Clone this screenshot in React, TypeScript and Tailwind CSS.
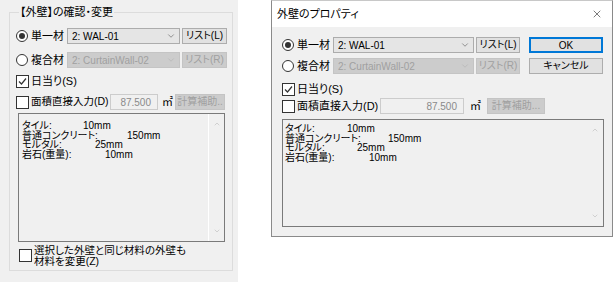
import { ChevronDown, ChevronUp, X } from "lucide-react";

const font = "font-['Liberation_Sans','Noto_Sans_CJK_JP',sans-serif] [font-feature-settings:'palt']";

export default function App() {
  return (
    <div className={`flex h-[282px] w-[615px] items-start whitespace-nowrap bg-white text-[11px] text-black ${font}`}>
      <LeftPanel />
      <PropertyDialog />
    </div>
  );
}

function LeftPanel() {
  return (
    <div className="h-[282px] w-[238px] shrink-0 bg-[#f0f0f0] pl-[9px] pt-[4px]">
      <fieldset className="h-[267px] w-[224px] border border-[#dcdcdc] pl-[6px]">
        <legend className="ml-[3px] h-[16px] px-[1px] leading-[16px]">【外壁】の確認・変更</legend>

        <div className="mt-[8px] flex h-[16px] items-center">
          <Choice checked label="単一材" w="w-[51px]" />
          <Combo value="2: WAL-01" className="w-[113px]" />
          <Button label="リスト(L)" className="ml-[2px] w-[45px]" />
        </div>
        <div className="mt-[8px] flex h-[16px] items-center">
          <Choice label="複合材" w="w-[51px]" />
          <Combo value="2: CurtainWall-02" disabled className="w-[113px]" />
          <Button label="リスト(R)" disabled className="ml-[2px] w-[45px]" />
        </div>

        <div className="mt-[5px] flex h-[16px] items-center">
          <Check checked />
          <span className="ml-[2px]">日当り(S)</span>
        </div>
        <div className="mt-[5px] flex h-[16px] items-center">
          <Check />
          <span className="ml-[2px] w-[79px] text-[10.5px]">面積直接入力(D)</span>
          <Field value="87.500" className="w-[48px]" />
          <span className="ml-[4px] w-[12px]">㎡</span>
          <Button label="計算補助.." disabled className="ml-[1px] w-[50px]" />
        </div>

        <Memo
          className="ml-[2px] mt-[3px] h-[129px] w-[207px]"
          pad="pl-[3px] pt-[7px]"
          widths={["w-[61px]", "w-[105px]", "w-[73px]", "w-[83px]"]}
          divider
        />

        <div className="ml-[3px] mt-[3px] flex items-center">
          <Check />
          <span className="ml-[2px] text-[10.5px] leading-[10.5px]">
            選択した外壁と同じ材料の外壁も
            <br />
            材料を変更(Z)
          </span>
        </div>
      </fieldset>
    </div>
  );
}

function PropertyDialog() {
  return (
    <div className="ml-[33px] flex h-[237px] w-[342px] flex-col border border-[#8a8a8a] border-t-[#c8c8c8] bg-[#f0f0f0]">
      <div className="flex h-[26px] items-center justify-between bg-white pl-[5px] pr-[9px]">
        <span className="text-[11px]">外壁のプロパティ</span>
        <X className="h-[12px] w-[12px] text-[#222]" strokeWidth={1.2} />
      </div>

      <div className="pl-[10px] pt-[10px]">
        <div className="flex h-[16px] items-center">
          <Choice checked label="単一材" w="w-[51px]" />
          <Combo value="2: WAL-01" className="w-[141px]" />
          <Button label="リスト(L)" className="ml-[2px] w-[44px]" />
          <button className="ml-[9px] flex h-[16px] w-[74px] items-center justify-center border-2 border-[#0078d7] bg-[#e1e1e1] text-[10px]">
            OK
          </button>
        </div>
        <div className="mt-[5px] flex h-[16px] items-center">
          <Choice label="複合材" w="w-[51px]" />
          <Combo value="2: CurtainWall-02" disabled className="w-[141px]" />
          <Button label="リスト(R)" disabled className="ml-[2px] w-[44px]" />
          <Button label="キャンセル" className="ml-[9px] w-[74px]" />
        </div>

        <div className="mt-[7px] flex h-[16px] items-center">
          <Check checked />
          <span className="ml-[2px]">日当り(S)</span>
        </div>
        <div className="mt-[1px] flex h-[16px] items-center">
          <Check />
          <span className="ml-[2px] w-[83px]">面積直接入力(D)</span>
          <Field value="87.500" className="w-[84px]" />
          <span className="ml-[6px] w-[16px]">㎡</span>
          <Button label="計算補助..." disabled className="ml-[1px] w-[58px]" />
        </div>

        <Memo
          className="mt-[5px] h-[108px] w-[322px]"
          pad="pl-[2px] pt-[4px]"
          widths={["w-[62px]", "w-[103px]", "w-[72px]", "w-[84px]"]}
        />
      </div>
    </div>
  );
}

function Choice({ checked, label, w }: { checked?: boolean; label: string; w: string }) {
  return (
    <span className={`flex shrink-0 items-center ${w}`}>
      <span className="flex h-[12px] w-[12px] shrink-0 items-center justify-center rounded-full border border-[#333] bg-white">
        {checked && <span className="h-[6px] w-[6px] rounded-full bg-[#333]" />}
      </span>
      <span className="ml-[3px]">{label}</span>
    </span>
  );
}

function Check({ checked }: { checked?: boolean }) {
  return (
    <span className="flex h-[13px] w-[13px] shrink-0 items-center justify-center border border-[#333] bg-white">
      {checked && (
        <svg viewBox="0 0 11 11" className="h-[11px] w-[11px]">
          <path d="M2 5.5 L4.5 8 L9 2.5" fill="none" stroke="#333" strokeWidth="1.2" />
        </svg>
      )}
    </span>
  );
}

function Combo({ value, disabled, className }: { value: string; disabled?: boolean; className: string }) {
  return (
    <div
      className={`flex h-[16px] shrink-0 items-center justify-between border pl-[4px] pr-[3px] text-[10px] ${className} ${
        disabled ? "border-[#c4c4c4] bg-[#cccccc] text-[#a0a0a0]" : "border-[#acacac] bg-[#e5e5e5]"
      }`}
    >
      <span className="truncate">{value}</span>
      <ChevronDown className={`h-[10px] w-[10px] ${disabled ? "text-[#b0b0b0]" : "text-[#555]"}`} strokeWidth={1.4} />
    </div>
  );
}

function Button({ label, disabled, className }: { label: string; disabled?: boolean; className: string }) {
  return (
    <button
      className={`flex h-[16px] shrink-0 items-center justify-center overflow-hidden border text-[10px] leading-none ${className} ${
        disabled ? "border-[#c4c4c4] bg-[#cccccc] text-[#a0a0a0]" : "border-[#adadad] bg-[#e1e1e1]"
      }`}
    >
      {label}
    </button>
  );
}

function Field({ value, className }: { value: string; className: string }) {
  return (
    <div className={`flex h-[16px] shrink-0 items-center justify-end border border-[#cccccc] bg-[#f0f0f0] pr-[6px] text-[10px] text-[#8a8a8a] ${className}`}>
      {value}
    </div>
  );
}

const rows = [
  ["タイル:", "10mm"],
  ["普通コンクリート:", "150mm"],
  ["モルタル:", "25mm"],
  ["岩石(重量):", "10mm"],
];

function Memo({ className, pad, widths, divider }: { className: string; pad: string; widths: string[]; divider?: boolean }) {
  return (
    <div className={`flex border border-[#7a7a7a] bg-[#f0f0f0] ${className}`}>
      <div className={`flex-1 text-[10px] leading-[9.5px] ${pad}`}>
        {rows.map(([k, v], i) => (
          <div key={k} className="flex">
            <span className={`shrink-0 ${widths[i]}`}>{k}</span>
            <span>{v}</span>
          </div>
        ))}
      </div>
      <div className={`flex w-[16px] flex-col items-center justify-between py-[6px] ${divider ? "border-l border-white" : ""}`}>
        <ChevronUp className="h-[8px] w-[8px] text-[#c0c0c0]" strokeWidth={2} />
        <ChevronDown className="h-[8px] w-[8px] text-[#c0c0c0]" strokeWidth={2} />
      </div>
    </div>
  );
}
